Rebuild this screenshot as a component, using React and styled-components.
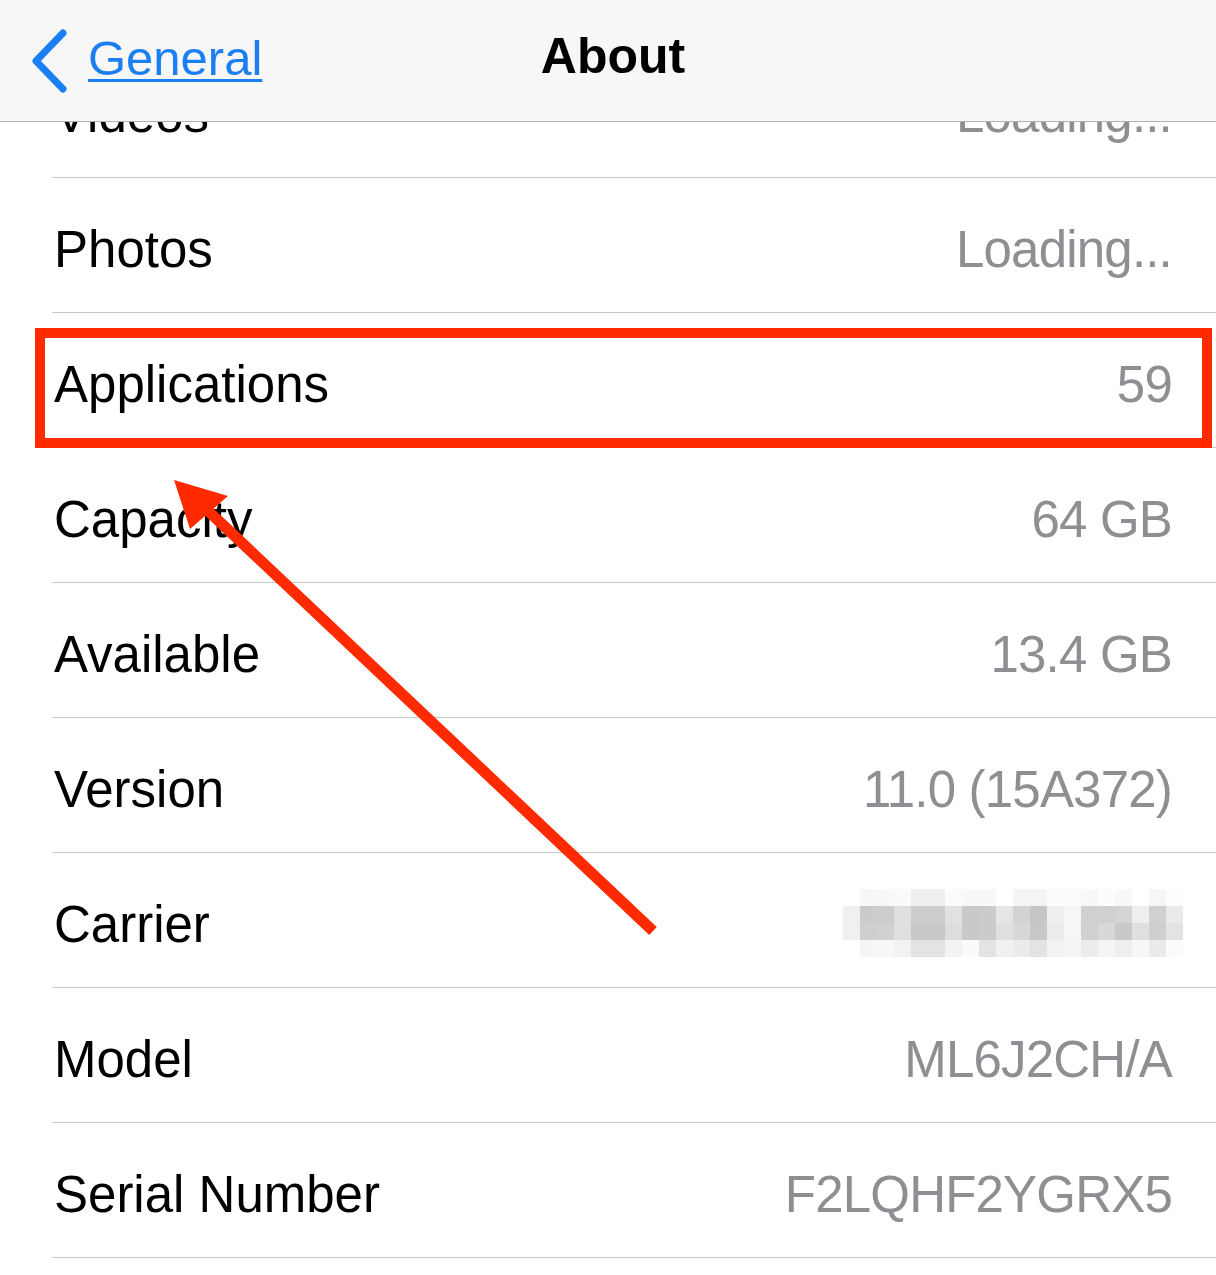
import React from "react";
import styled, { createGlobalStyle } from "styled-components";

const rows = [
  { label: "Videos", value: "Loading..." },
  { label: "Photos", value: "Loading..." },
  { label: "Applications", value: "59" },
  { label: "Capacity", value: "64 GB" },
  { label: "Available", value: "13.4 GB" },
  { label: "Version", value: "11.0 (15A372)" },
  { label: "Carrier", blurred: true },
  { label: "Model", value: "ML6J2CH/A" },
  { label: "Serial Number", value: "F2LQHF2YGRX5" },
];

// pixelated carrier name, 20 x 4 blocks of grey
const blur = [
  "ff f7 f8 fa ef ef fb f8 f8 ff f4 f4 fc fc f8 fc f8 ff f6 fd",
  "f0 cb cd df cd cd e1 c9 cb e5 d3 c6 ef f6 d0 d0 d4 ee d0 ea",
  "f0 cf d1 df c9 c9 dd c9 cb e0 d7 c8 ec f6 d1 d8 c9 df cf e3",
  "ff f5 f7 f2 e3 e3 f3 fa e3 f0 eb e3 f3 f5 ec f5 ef f7 ea fb",
].map(r => r.split(" "));

const GlobalStyle = createGlobalStyle`
  html, body {
    margin: 0;
    padding: 0;
    background: #fff;
  }
  body {
    font-family: "Liberation Sans", Arial, sans-serif;
    -webkit-font-smoothing: antialiased;
  }
`;

const Screen = styled.div`
  position: relative;
  width: 1216px;
  height: 1275px;
  overflow: hidden;
  background: #fff;
`;

const NavBar = styled.div`
  position: absolute;
  top: 0;
  left: 0;
  right: 0;
  height: 121px;
  background: #f7f7f8;
  border-bottom: 1px solid #b2b2b2;
  z-index: 2;
  display: flex;
  align-items: center;
`;

const Back = styled.a`
  display: flex;
  align-items: center;
  gap: 18px;
  padding-left: 30px;
  color: #1a7ff2;
  font-size: 49px;
  text-decoration: none;
`;

const BackText = styled.span`
  text-decoration: underline;
  text-decoration-thickness: 3px;
  text-underline-offset: 4px;
  margin-top: -6px;
`;

const Title = styled.div`
  position: absolute;
  left: 0;
  right: 0;
  text-align: center;
  font-size: 50px;
  font-weight: 700;
  color: #000;
  pointer-events: none;
  margin-top: -10px;
  padding-left: 10px;
`;

const List = styled.div`
  padding-top: 43px;
`;

const Row = styled.div`
  margin-left: 52px;
  height: 135px;
  box-sizing: border-box;
  border-bottom: 1px solid #c8c7cc;
  display: flex;
  align-items: center;
  justify-content: space-between;
  padding: 8px 44px 0 2px;
  font-size: 51px;
`;

const Label = styled.span`
  color: #000;
`;

const Value = styled.span`
  color: #8e8e93;
  letter-spacing: -0.8px;
`;

const Blur = styled.svg`
  display: block;
  margin-right: -11px;
  margin-top: -2px;
`;

const Highlight = styled.div`
  position: absolute;
  left: 35px;
  top: 328px;
  width: 1177px;
  height: 120px;
  box-sizing: border-box;
  border: 10px solid #ff2a00;
  z-index: 1;
`;

const Overlay = styled.svg`
  position: absolute;
  left: 0;
  top: 0;
  z-index: 1;
  pointer-events: none;
`;

const Chevron = () => (
  <svg width="40" height="66" viewBox="0 0 40 66">
    <path
      d="M33 5 L6 33 L33 61"
      fill="none"
      stroke="#1a7ff2"
      strokeWidth="7"
      strokeLinecap="round"
      strokeLinejoin="round"
    />
  </svg>
);

const App = () => (
  <Screen>
    <GlobalStyle />
    <NavBar>
      <Back>
        <Chevron />
        <BackText>General</BackText>
      </Back>
      <Title>About</Title>
    </NavBar>
    <List>
      {rows.map(r => (
        <Row key={r.label}>
          <Label>{r.label}</Label>
          {r.blurred ? (
            <Blur width="340" height="68" viewBox="0 0 340 68">
              {blur.map((line, y) =>
                line.map((c, x) => (
                  <rect
                    key={x + "-" + y}
                    x={x * 17}
                    y={y * 17}
                    width="17"
                    height="17"
                    fill={"#" + c + c + c}
                  />
                ))
              )}
            </Blur>
          ) : (
            <Value>{r.value}</Value>
          )}
        </Row>
      ))}
    </List>
    <Highlight />
    <Overlay width="1216" height="1275" viewBox="0 0 1216 1275">
      <line x1="653" y1="931" x2="205" y2="508" stroke="#ff2a00" strokeWidth="11" />
      <polygon points="174,480 228,496 190,529" fill="#ff2a00" />
    </Overlay>
  </Screen>
);

export default App;
